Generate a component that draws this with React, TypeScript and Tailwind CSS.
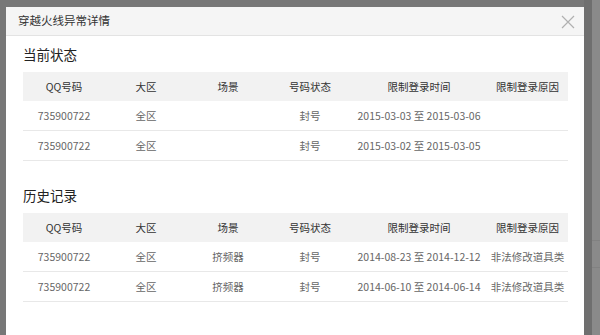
import React from 'react';

type Row = {
  qq: string;
  zone: string;
  scene: string;
  status: string;
  time: string;
  reason: string;
};

const current: Row[] = [
  { qq: '735900722', zone: '全区', scene: '', status: '封号', time: '2015-03-03 至 2015-03-06', reason: '' },
  { qq: '735900722', zone: '全区', scene: '', status: '封号', time: '2015-03-02 至 2015-03-05', reason: '' },
];

const history: Row[] = [
  { qq: '735900722', zone: '全区', scene: '挤频器', status: '封号', time: '2014-08-23 至 2014-12-12', reason: '非法修改道具类' },
  { qq: '735900722', zone: '全区', scene: '挤频器', status: '封号', time: '2014-06-10 至 2014-06-14', reason: '非法修改道具类' },
];

const cols = ['QQ号码', '大区', '场景', '号码状态', '限制登录时间', '限制登录原因'];
// 列宽: 82 x4, 136, 81
const widths = ['w-[82px]', 'w-[82px]', 'w-[82px]', 'w-[82px]', 'w-[136px]', 'w-[81px]'];

function StatusTable({ rows }: { rows: Row[] }) {
  return (
    <div className="w-[545px] text-[10.5px]">
      <div className="flex h-[29px] items-center bg-[#f2f2f2] text-[#333]">
        {cols.map((c, i) => (
          <div key={c} className={`${widths[i]} text-center`}>
            {c}
          </div>
        ))}
      </div>
      {rows.map((r, idx) => {
        const cells = [r.qq, r.zone, r.scene, r.status, r.time, r.reason];
        return (
          <div key={idx} className="flex h-[30px] items-center border-b border-[#e8e8e8] text-[#666]">
            {cells.map((v, i) => (
              <div key={i} className={`${widths[i]} text-center whitespace-nowrap`}>
                {v}
              </div>
            ))}
          </div>
        );
      })}
    </div>
  );
}

export default function App() {
  return (
    <div
      className="relative h-[335px] w-[600px] overflow-hidden bg-[#777777]"
      style={{ fontFamily: '"Noto Sans CJK SC", "Liberation Sans", sans-serif' }}
    >
      {/* 页面滚动条(遮罩下) */}
      <div className="absolute right-0 top-0 h-full w-[16px] flex">
        <div className="h-full w-[8px] bg-[#6f6f6f]" />
        <div className="relative h-full w-[8px] bg-[#8a8a8a]">
          <div className="absolute left-0 top-[240px] h-px w-full bg-[#818181]" />
          <div className="absolute left-0 top-[267px] h-px w-full bg-[#818181]" />
        </div>
      </div>

      <div className="absolute left-[6px] top-[7px] h-[340px] w-[578px] bg-white">
        <div className="flex h-[29px] items-center justify-between border-b border-[#e3e3e3] bg-[#f5f5f5] pl-[12px] pr-[8px]">
          <span className="text-[11.5px] text-[#333]">穿越火线异常详情</span>
          <svg width="14" height="14" viewBox="0 0 14 14" className="mr-[1px] mt-[1px]">
            <path d="M1 1 L13 13 M13 1 L1 13" stroke="#b0b0b0" strokeWidth="1.2" fill="none" />
          </svg>
        </div>
        <div className="px-[17px]">
          <div className="flex h-[36px] items-center text-[13.5px] text-[#222]">当前状态</div>
          <StatusTable rows={current} />
          <div className="mt-[16px] flex h-[36px] items-center text-[13.5px] text-[#222]">历史记录</div>
          <StatusTable rows={history} />
        </div>
      </div>
    </div>
  );
}
